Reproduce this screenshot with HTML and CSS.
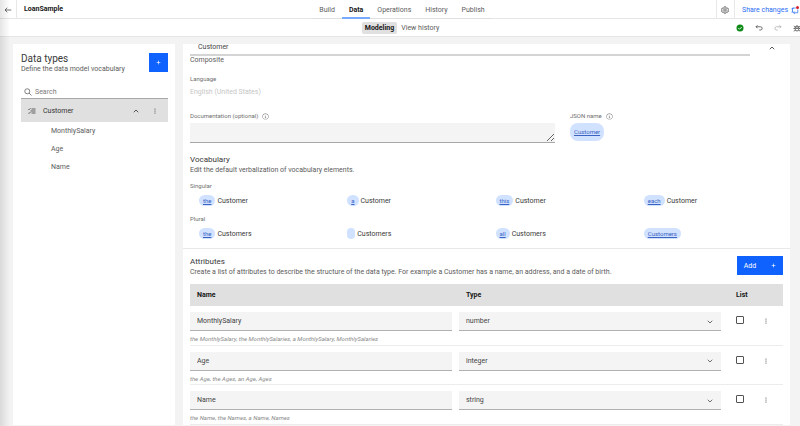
FILE: index.html
```html
<!DOCTYPE html>
<html lang="en">
<head>
<meta charset="utf-8">
<title>LoanSample</title>
<link rel="stylesheet" href="styles.css">
</head>
<body>
<svg class="defs" aria-hidden="true">
  <symbol id="info" viewBox="0 0 32 32"><path d="M17 22v-8h-4v2h2v6h-3v2h8v-2zM16 8a1.500 1.500 0 1 0 0 3 1.500 1.500 0 0 0 0-3zM16 30a14 14 0 1 1 14-14 14 14 0 0 1-14 14zm0-26a12 12 0 1 0 12 12A12 12 0 0 0 16 4z"/></symbol>
  <symbol id="dots" viewBox="0 0 32 32"><circle cx="16" cy="8" r="2.400"/><circle cx="16" cy="16" r="2.400"/><circle cx="16" cy="24" r="2.400"/></symbol>
  <symbol id="up" viewBox="0 0 32 32"><path d="M7 21l9-9 9 9" fill="none" stroke="currentColor" stroke-width="3.500"/></symbol>
  <symbol id="down" viewBox="0 0 32 32"><path d="M7 11l9 9 9-9" fill="none" stroke="currentColor" stroke-width="3.500"/></symbol>
  <symbol id="plus" viewBox="0 0 32 32"><path d="M16 4v24M4 16h24" fill="none" stroke="currentColor" stroke-width="4"/></symbol>
  <symbol id="undo" viewBox="0 0 32 32"><path d="M10 5L4 11l6 6M4 11h18a6 6 0 0 1 0 13h-5" fill="none" stroke="currentColor" stroke-width="3"/></symbol>
  <symbol id="redo" viewBox="0 0 32 32"><path d="M22 5l6 6-6 6M28 11H10a6 6 0 0 0 0 13h5" fill="none" stroke="currentColor" stroke-width="3"/></symbol>
</svg>
<header class="topbar">
  <div class="brand">
    <button class="back" aria-label="Back"><svg class="icon" viewBox="0 0 32 32"><path d="M13 7L4 16l9 9M4 16h25" fill="none" stroke="currentColor" stroke-width="3"/></svg></button>
    <h1>LoanSample</h1>
  </div>
  <nav class="tabs">
    <a href="#build">Build</a><a href="#data" class="current" aria-current="page">Data</a><a href="#operations">Operations</a><a href="#history">History</a><a href="#publish">Publish</a>
  </nav>
  <div class="top-actions">
    <button class="settings" aria-label="Settings"><svg class="icon line" viewBox="0 0 32 32"><path d="M13 3h6l1 4 3 2 4-1 3 5-3 3 3 4-3 5-4-1-3 1-1 4h-6l-1-4-3-1-4 1-3-5 3-4-3-3 3-5 4 1 3-2z"/><circle cx="16" cy="16" r="5"/></svg></button>
    <button class="share">Share changes <svg class="icon" viewBox="0 0 32 32"><path d="M6 24V8h13M2 13l4-5 4 4M27 14v13H10M15 22l-5 5 5 5M2 24h8" fill="none" stroke="currentColor" stroke-width="3"/><circle cx="26" cy="6" r="6" fill="#da1e28"/></svg></button>
  </div>
</header>
<div class="subbar">
  <nav class="views"><a href="#modeling" class="current">Modeling</a><a href="#view-history">View history</a></nav>
  <div class="tools">
    <button aria-label="Valid"><svg class="icon" viewBox="0 0 32 32"><circle cx="16" cy="16" r="14" fill="#0e8a16"/><path d="M9 16l5 5 9-9" fill="none" stroke="#fff" stroke-width="3.500"/></svg></button>
    <button aria-label="Undo"><svg class="icon"><use href="#undo"/></svg></button>
    <button aria-label="Redo" class="muted"><svg class="icon"><use href="#redo"/></svg></button>
    <button aria-label="Debug"><svg class="icon line" viewBox="0 0 32 32"><path d="M9 12h14v9a7 7 0 0 1-14 0zM11 12a5 5 0 0 1 10 0M2 18h7M23 18h7M3 8l6 5M29 8l-6 5M3 29l7-5M29 29l-7-5M12 18h8"/></svg></button>
  </div>
</div>
<main class="workspace">
  <aside class="panel types">
    <div class="types-head">
      <div><h2>Data types</h2><p>Define the data model vocabulary</p></div>
      <button class="primary square" aria-label="Add data type"><svg class="icon"><use href="#plus"/></svg></button>
    </div>
    <label class="search"><svg class="icon line" viewBox="0 0 32 32"><circle cx="13" cy="13" r="10"/><path d="M20 20l10 10"/></svg><input type="search" placeholder="Search" aria-label="Search"></label>
    <div class="type-row">
      <svg class="icon line" viewBox="0 0 32 32"><path d="M14 8h16M10 16h20M14 24h16M1 8l3 3 6-6M1 23l3 3 6-6"/></svg>
      <span>Customer</span>
      <button aria-label="Collapse"><svg class="icon"><use href="#up"/></svg></button>
      <button aria-label="More"><svg class="icon"><use href="#dots"/></svg></button>
    </div>
    <ul class="fields"><li>MonthlySalary</li><li>Age</li><li>Name</li></ul>
  </aside>
  <section class="panel detail">
    <div class="block">
      <div class="name-row">
        <input class="type-name" aria-label="Data type name" value="Customer">
        <button aria-label="Collapse"><svg class="icon"><use href="#up"/></svg></button>
      </div>
      <p class="kind">Composite</p>
      <h4>Language</h4>
      <p class="locale">English (United States)</p>
      <div class="doc-row">
        <div class="doc">
          <label for="doc">Documentation (optional) <svg class="icon"><use href="#info"/></svg></label>
          <textarea id="doc"></textarea>
        </div>
        <div class="json">
          <h4>JSON name <svg class="icon"><use href="#info"/></svg></h4>
          <a href="#json" class="tag large">Customer</a>
        </div>
      </div>
      <h3>Vocabulary</h3>
      <p>Edit the default verbalization of vocabulary elements.</p>
      <h4 class="form">Singular</h4>
      <div class="terms">
        <span><a href="#t" class="tag">the</a>Customer</span><span><a href="#t" class="tag">a</a>Customer</span><span><a href="#t" class="tag">this</a>Customer</span><span><a href="#t" class="tag">each</a>Customer</span>
      </div>
      <h4 class="form">Plural</h4>
      <div class="terms">
        <span><a href="#t" class="tag">the</a>Customers</span><span><a href="#t" class="tag" aria-label="none"></a>Customers</span><span><a href="#t" class="tag">all</a>Customers</span><span><a href="#t" class="tag">Customers</a></span>
      </div>
    </div>
    <div class="block attributes">
      <div class="attr-head">
        <div><h3>Attributes</h3><p>Create a list of attributes to describe the structure of the data type. For example a Customer has a name, an address, and a date of birth.</p></div>
        <button class="primary add">Add <svg class="icon"><use href="#plus"/></svg></button>
      </div>
      <table>
        <colgroup><col><col><col class="c-list"><col class="c-menu"></colgroup>
        <thead><tr><th>Name</th><th>Type</th><th>List</th><th></th></tr></thead>
        <tbody>
          <tr><td><input class="cell" aria-label="Name" value="MonthlySalary"></td><td><div class="pick"><select class="cell" aria-label="Type"><option>number</option></select><svg class="icon"><use href="#down"/></svg></div></td><td><input type="checkbox" aria-label="List"></td><td><button aria-label="More"><svg class="icon"><use href="#dots"/></svg></button></td></tr>
          <tr class="hint"><td colspan="4">the MonthlySalary, the MonthlySalaries, a MonthlySalary, MonthlySalaries</td></tr>
          <tr><td><input class="cell" aria-label="Name" value="Age"></td><td><div class="pick"><select class="cell" aria-label="Type"><option>integer</option></select><svg class="icon"><use href="#down"/></svg></div></td><td><input type="checkbox" aria-label="List"></td><td><button aria-label="More"><svg class="icon"><use href="#dots"/></svg></button></td></tr>
          <tr class="hint"><td colspan="4">the Age, the Ages, an Age, Ages</td></tr>
          <tr><td><input class="cell" aria-label="Name" value="Name"></td><td><div class="pick"><select class="cell" aria-label="Type"><option>string</option></select><svg class="icon"><use href="#down"/></svg></div></td><td><input type="checkbox" aria-label="List"></td><td><button aria-label="More"><svg class="icon"><use href="#dots"/></svg></button></td></tr>
          <tr class="hint"><td colspan="4">the Name, the Names, a Name, Names</td></tr>
        </tbody>
      </table>
    </div>
  </section>
</main>
</body>
</html>
```
FILE: styles.css
```css
* { box-sizing: border-box; margin: 0; padding: 0; }
body {
  display: flex; flex-direction: column; height: 100vh; overflow: hidden;
  background: #f3f3f3; color: #5c5c5c;
  font: 7px/10px Roboto, "Noto Sans", sans-serif;
}
body::before {
  content: ""; position: absolute; top: 0; bottom: 0; left: 0; width: 10px; z-index: 1;
  background: linear-gradient(to right, rgba(0, 0, 0, .1), transparent); pointer-events: none;
}
.defs { position: absolute; width: 0; height: 0; }
.icon { width: 8px; height: 8px; flex: none; fill: currentColor; }
.icon.line { fill: none; stroke: currentColor; stroke-width: 3; }
button { display: flex; align-items: center; justify-content: center; border: 0; background: none; color: #444; font: inherit; }
input, select, textarea { font: inherit; color: #444; border: 0; outline: 0; border-radius: 0; appearance: none; background: none; }
a { color: inherit; text-decoration: none; }
h1, h2, h3, h4 { font-weight: 400; }

.topbar, .subbar { display: grid; grid-template-columns: 1fr auto 1fr; background: #fff; border-bottom: 1px solid #e6e6e6; }
.topbar { height: 19px; }
.brand { display: flex; }
.back { width: 17px; border-right: 1px solid #e8e8e8; }
h1 { padding-left: 7px; font-size: 7px; line-height: 18px; font-weight: 700; color: #161616; }
.tabs { display: flex; height: 19px; margin-left: 4px; }
.tabs a { padding: 1px 7px 0; line-height: 18px; border-bottom: 1px solid #e0e0e0; }
.tabs .current { font-weight: 700; color: #161616; border-bottom: 2px solid #78a9ff; }
.top-actions { display: flex; justify-content: flex-end; }
.settings { width: 19px; border: solid #e8e8e8; border-width: 0 1px; }
.share { gap: 3px; padding: 0 1px 0 7px; color: #2a6df5; white-space: nowrap; }

.subbar { align-items: center; height: 18px; }
.views { grid-column: 2; display: flex; gap: 1px; margin-left: 4px; }
.views a { padding: 1px 3px; border-radius: 2px; }
.views .current { background: #e0e0e0; color: #161616; font-weight: 700; }
.tools { display: flex; justify-content: flex-end; gap: 11px; margin-right: -1px; }
.tools .muted { color: #a8a8a8; }

.workspace { flex: 1; display: grid; grid-template-columns: 162px 1fr; gap: 8px; padding: 7px 10px 1px 13px; min-height: 0; }
.panel { background: #fff; min-width: 0; overflow: hidden; }
.types { padding: 9px 7px 0 8px; }
.types-head { display: flex; justify-content: space-between; align-items: flex-start; }
h2 { font-size: 10px; line-height: 11px; color: #393939; }
.primary { background: #0f62fe; color: #fff; height: 19px; }
.primary .icon { width: 5px; height: 5px; }
.square { width: 19px; }
.search { display: flex; align-items: center; gap: 3px; margin-top: 11px; padding-left: 3px; height: 14px; border-bottom: 1px solid #a8a8a8; }
.search input { flex: 1; min-width: 0; }
.search input::placeholder { color: #7a7a7a; opacity: 1; }
.type-row { display: flex; align-items: center; height: 23px; padding: 0 9px 0 7px; background: #e0e0e0; color: #333; }
.type-row span { flex: 1; margin-left: 7px; }
.type-row button + button { margin-left: 11px; }
.fields { list-style: none; padding-left: 30px; }
.fields li { line-height: 18px; }

.block { padding: 0 7px; }
.name-row { display: flex; align-items: flex-start; height: 12px; }
.name-row button { width: 33px; padding-left: 10px; }
.type-name { flex: 1; height: 12px; padding: 0 8px 5px; border-bottom: 2px solid #d4d4d4; min-width: 0; }
.kind { line-height: 8px; }
h4, .doc label { display: flex; align-items: center; gap: 4px; font-size: 6px; color: #6f6f6f; }
.kind + h4 { margin-top: 10px; }
.locale { color: #c6c6c6; margin-top: 3px; }
.doc-row { display: grid; grid-template-columns: 365px 1fr; gap: 15px; margin-top: 14px; }
.doc-row .icon { width: 7px; height: 7px; }
textarea { display: block; width: 100%; height: 20px; margin-top: 2px; background: #f4f4f4; border-bottom: 1px solid #a8a8a8; resize: vertical; }
.tag { display: inline-block; min-width: 8px; height: 11px; line-height: 11px; padding: 0 4px; border-radius: 6px; background: #d0e2ff; color: #3a63c4; font-size: 6px; text-decoration: underline; }
.tag.large { height: 18px; line-height: 18px; margin-top: 2px; border-radius: 8px; }
h3 { font-size: 8px; line-height: 11px; color: #393939; }
.doc-row + h3 { margin-top: 11px; }
.form { margin-top: 6px; }
.terms { display: grid; grid-template-columns: repeat(4, 1fr); margin-top: 4px; padding-left: 9px; margin-right: -9px; color: #393939; }
.terms span { display: flex; align-items: center; gap: 2px; height: 11px; }
.terms + .form { margin-top: 8px; }
.attributes { margin-top: 9px; padding-top: 7px; border-top: 1px solid #e8e8e8; }
.attr-head { display: flex; justify-content: space-between; }
.add { width: 46px; gap: 15px; }
table { width: 100%; margin-top: 7px; border-collapse: collapse; table-layout: fixed; }
.c-list { width: 30px; }
.c-menu { width: 25px; }
th { height: 22px; background: #e0e0e0; color: #161616; font-weight: 700; text-align: left; padding-left: 7px; }
td { padding: 6px 7px 0 0; vertical-align: top; }
th:nth-child(3) { padding-left: 8px; }
.cell { display: block; width: 100%; height: 19px; padding: 0 7px; background: #f4f4f4; border-bottom: 1px solid #b0b0b0; }
.pick { display: grid; }
.pick > * { grid-area: 1 / 1; }
.pick .icon { justify-self: end; align-self: center; margin-right: 7px; pointer-events: none; }
td:nth-child(3) { padding: 10px 0 0 8px; }
td:nth-child(4) { padding: 11px 0 0 4px; }
[type="checkbox"] { display: block; width: 8px; height: 8px; border: 1px solid #525252; border-radius: 1px; }
.hint td { height: 14px; padding: 3px 0 0; line-height: 9px; border-bottom: 1px solid #ececec; color: #8a8a8a; font-size: 6px; font-style: italic; }
```
